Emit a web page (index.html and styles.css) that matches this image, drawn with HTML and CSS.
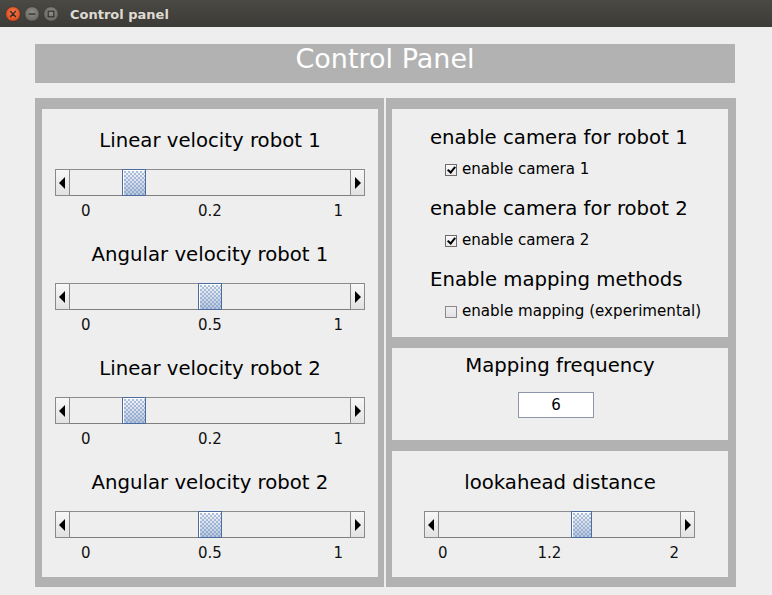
FILE: index.html
```html
<!DOCTYPE html>
<html>
<head>
<meta charset="utf-8">
<link rel="stylesheet" href="styles.css">
</head>
<body>
<div class="titlebar">
  <div class="wbtns">
    <svg class="wbtn" width="16" height="16" viewBox="0 0 16 16">
      <defs>
        <radialGradient id="gc" cx="50%" cy="40%" r="60%"><stop offset="0" stop-color="#f47a4a"/><stop offset="1" stop-color="#d8481a"/></radialGradient>
        <radialGradient id="gg" cx="50%" cy="40%" r="60%"><stop offset="0" stop-color="#8e8d88"/><stop offset="1" stop-color="#676661"/></radialGradient>
      </defs>
      <circle cx="8" cy="8" r="7.3" fill="url(#gc)" stroke="#3a2f29" stroke-width="0.6"/>
      <path d="M5.6 5.6 L10.4 10.4 M10.4 5.6 L5.6 10.4" stroke="#3a2a22" stroke-width="1.4" stroke-linecap="round"/>
    </svg>
    <svg class="wbtn" width="16" height="16" viewBox="0 0 16 16">
      <circle cx="8" cy="8" r="7.3" fill="url(#gg)" stroke="#34332f" stroke-width="0.6"/>
      <path d="M4.8 8 H11.2" stroke="#34332f" stroke-width="1.4"/>
    </svg>
    <svg class="wbtn" width="16" height="16" viewBox="0 0 16 16">
      <circle cx="8" cy="8" r="7.3" fill="url(#gg)" stroke="#34332f" stroke-width="0.6"/>
      <rect x="5.2" y="5.2" width="5.6" height="5.6" fill="none" stroke="#34332f" stroke-width="1.2"/>
    </svg>
  </div>
  <span class="wtitle">Control panel</span>
</div>

<div class="content">
  <div class="header">Control Panel</div>

  <div class="panels">
    <div class="left">
      <div class="lgroup">
        <div class="heading">Linear velocity robot 1</div>
        <div class="slider">
          <div class="arrow"><span class="tri-l"></span></div>
          <div class="track"><div class="thumb" style="left:18.6%"></div></div>
          <div class="arrow"><span class="tri-r"></span></div>
        </div>
        <div class="ticks"><span>0</span><span>0.2</span><span>1</span></div>
      </div>
      <div class="lgroup">
        <div class="heading">Angular velocity robot 1</div>
        <div class="slider">
          <div class="arrow"><span class="tri-l"></span></div>
          <div class="track"><div class="thumb" style="left:45.7%"></div></div>
          <div class="arrow"><span class="tri-r"></span></div>
        </div>
        <div class="ticks"><span>0</span><span>0.5</span><span>1</span></div>
      </div>
      <div class="lgroup">
        <div class="heading">Linear velocity robot 2</div>
        <div class="slider">
          <div class="arrow"><span class="tri-l"></span></div>
          <div class="track"><div class="thumb" style="left:18.6%"></div></div>
          <div class="arrow"><span class="tri-r"></span></div>
        </div>
        <div class="ticks"><span>0</span><span>0.2</span><span>1</span></div>
      </div>
      <div class="lgroup">
        <div class="heading">Angular velocity robot 2</div>
        <div class="slider">
          <div class="arrow"><span class="tri-l"></span></div>
          <div class="track"><div class="thumb" style="left:45.7%"></div></div>
          <div class="arrow"><span class="tri-r"></span></div>
        </div>
        <div class="ticks"><span>0</span><span>0.5</span><span>1</span></div>
      </div>
    </div>

    <div class="right">
      <div class="sec sec-cams">
        <div class="camlist">
          <div class="heading">enable camera for robot 1</div>
          <label class="check"><span class="box checked"></span>enable camera 1</label>
          <div class="heading">enable camera for robot 2</div>
          <label class="check"><span class="box checked"></span>enable camera 2</label>
          <div class="heading">Enable mapping methods</div>
          <label class="check"><span class="box"></span>enable mapping (experimental)</label>
        </div>
      </div>
      <div class="sec sec-freq">
        <div class="heading">Mapping frequency</div>
        <div class="field">6</div>
      </div>
      <div class="sec sec-look">
        <div class="heading">lookahead distance</div>
        <div class="slider slider-r">
          <div class="arrow"><span class="tri-l"></span></div>
          <div class="track"><div class="thumb thumb-n" style="left:54.6%"></div></div>
          <div class="arrow"><span class="tri-r"></span></div>
        </div>
        <div class="ticks ticks-r"><span>0</span><span>1.2</span><span>2</span></div>
      </div>
    </div>
  </div>
</div>
</body>
</html>
```

FILE: styles.css
```css
* { box-sizing: border-box; }
html, body { margin: 0; padding: 0; }
body {
  width: 772px;
  height: 595px;
  background: #eeeeee;
  font-family: "DejaVu Sans", sans-serif;
  color: #000;
  overflow: hidden;
}

.titlebar {
  height: 27px;
  background: linear-gradient(#4a4944, #3c3b37);
  display: flex;
  align-items: center;
}
.wbtns {
  display: flex;
  gap: 3px;
  margin-left: 5px;
  margin-top: 1px;
}
.wbtn { display: block; }
.wtitle {
  margin-left: 11px;
  font-family: "DejaVu Sans", sans-serif;
  font-weight: bold;
  font-size: 13px;
  color: #dfdbd2;
  margin-top: 1px;
}

.content {
  padding: 17px 0 0 35px;
}
.header {
  width: 700px;
  height: 39px;
  background: #b2b2b2;
  color: #ffffff;
  font-size: 27px;
  line-height: 30px;
  text-align: center;
}

.panels {
  display: flex;
  margin-top: 15px;
  gap: 2px;
}

.left {
  width: 349px;
  height: 489px;
  background: #eeeeee;
  border-style: solid;
  border-color: #b2b2b2;
  border-width: 11px 6px 10px 7px;
  padding-top: 20px;
}
.lgroup {
  margin-bottom: 22px;
}

.heading {
  font-size: 19.7px;
  line-height: 24px;
  text-align: center;
  white-space: nowrap;
}

.slider {
  display: flex;
  height: 27px;
  margin: 16px 13px 0 13px;
}
.arrow {
  width: 15px;
  flex: none;
  border: 1px solid #8a8a8a;
  background: linear-gradient(#f7f7f7, #e2e2e2);
  display: flex;
  align-items: center;
  justify-content: center;
}
.tri-l {
  width: 0; height: 0;
  border-top: 6px solid transparent;
  border-bottom: 6px solid transparent;
  border-right: 6px solid #000;
  margin-right: 2px;
}
.tri-r {
  width: 0; height: 0;
  border-top: 6px solid transparent;
  border-bottom: 6px solid transparent;
  border-left: 6px solid #000;
  margin-left: 1px;
}
.track {
  flex: 1;
  position: relative;
  border-top: 1px solid #8c8c8c;
  border-bottom: 1px solid #7e7e7e;
  background: #eeeeee;
}
.thumb {
  position: absolute;
  top: -1px;
  bottom: -1px;
  width: 24px;
  border: 1px solid #4c6c9e;
  background:
    radial-gradient(circle at 1px 1px, #7590bb 0.55px, transparent 0.9px) 1px 1px / 4px 4px,
    radial-gradient(circle at 1px 1px, #7590bb 0.55px, transparent 0.9px) 3px 3px / 4px 4px,
    linear-gradient(#f6f8fc, #b6c6df);
  box-shadow: inset 1px 1px 0 #ffffff;
}
.thumb-n { width: 21px; }

.ticks {
  display: grid;
  grid-template-columns: 1fr auto 1fr;
  margin-top: 6px;
  font-size: 15px;
  line-height: 19px;
  color: #111;
  padding: 0 35px 0 39px;
}
.ticks span:first-child { justify-self: start; }
.ticks span:nth-child(2) { padding-right: 4px; }
.ticks span:last-child { justify-self: end; }

.right {
  width: 350px;
  height: 489px;
  display: flex;
  flex-direction: column;
  gap: 11px;
  background: #b2b2b2;
  padding: 11px 8px 10px 6px;
}
.sec {
  background: #eeeeee;
}
.sec-cams {
  height: 228px;
  padding: 17px 0 0 38px;
}
.camlist {
  display: flex;
  flex-direction: column;
  align-items: flex-start;
}
.camlist .heading { text-align: left; }
.camlist .heading + .check { margin-top: 9px; }
.camlist .check + .heading { margin-top: 18px; }
.check {
  display: flex;
  align-items: center;
  height: 20px;
  font-size: 15.1px;
  margin-left: 15px;
}
.box {
  width: 12px;
  height: 12px;
  margin-right: 5px;
  margin-top: 1px;
  border: 1px solid #8a8a8a;
  background: linear-gradient(#f0f0f2, #e2e2e6);
  position: relative;
}
.box.checked {
  border-color: #6c6c6c;
  background: linear-gradient(#fafafa, #e8e8e8);
}
.box.checked::after {
  content: "";
  position: absolute;
  left: 3px;
  top: 0px;
  width: 3px;
  height: 6px;
  border-right: 2px solid #000;
  border-bottom: 2px solid #000;
  transform: rotate(40deg);
}

.sec-freq {
  height: 92px;
  padding-top: 6px;
  display: flex;
  flex-direction: column;
  align-items: center;
}
.field {
  margin-top: 14px;
  margin-right: 8px;
  width: 76px;
  height: 26px;
  border: 1px solid #8d96aa;
  background: #ffffff;
  font-size: 15px;
  line-height: 24px;
  text-align: center;
}

.sec-look {
  flex: 1;
  padding-top: 20px;
}
.slider-r {
  margin: 16px 33px 0 32px;
}
.ticks-r {
  padding: 0 49px 0 46px;
  display: flex;
}
.ticks-r span:nth-child(1) { margin-right: 90px; }
.ticks-r span:nth-child(2) { padding-right: 0; margin-right: auto; }
```
